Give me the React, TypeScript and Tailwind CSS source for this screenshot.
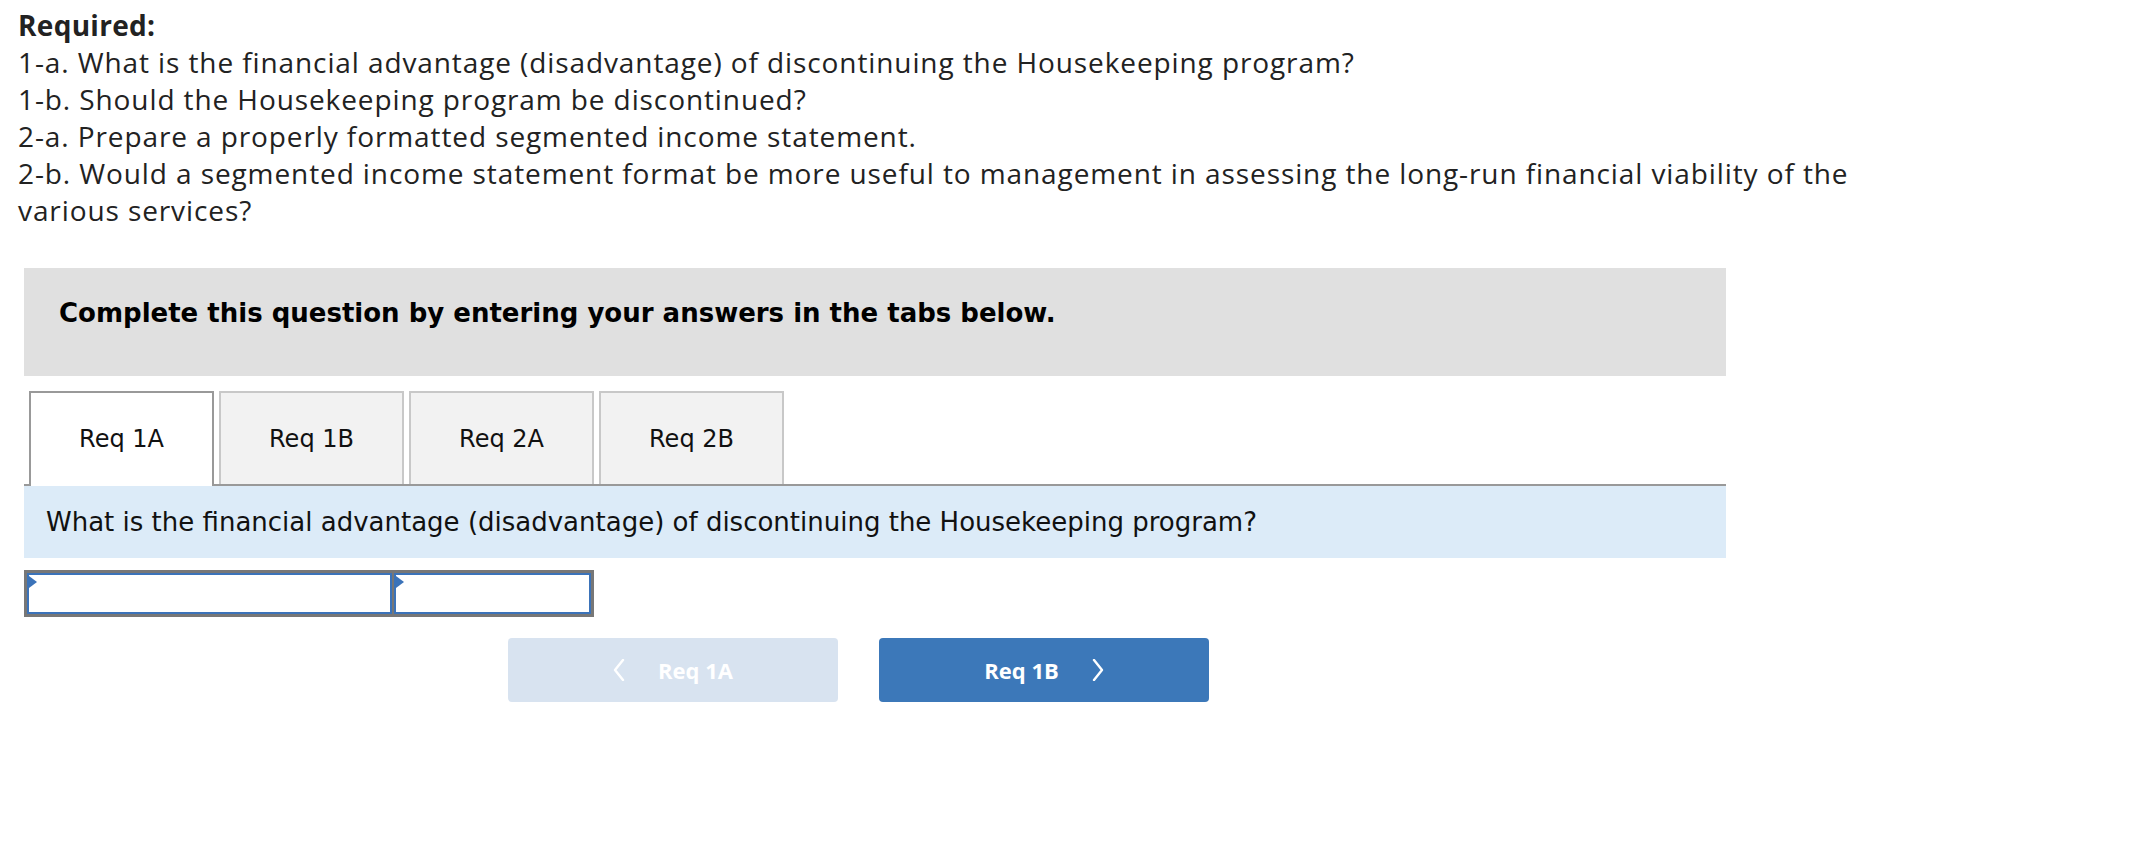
import React from 'react'

const tabs = ['Req 1A', 'Req 1B', 'Req 2A', 'Req 2B']

function Chevron({ dir }: { dir: 'left' | 'right' }) {
  return (
    <svg width="12" height="22" viewBox="0 0 12 22" fill="none">
      <polyline
        points={dir === 'left' ? '10,1 2,11 10,21' : '2,1 10,11 2,21'}
        stroke="white"
        strokeWidth="2.4"
        strokeLinecap="round"
        strokeLinejoin="round"
      />
    </svg>
  )
}

export default function App() {
  return (
    <div className="min-h-[850px] bg-white">
      {/* Required list */}
      <div className="w-[1900px] pt-[7px] pl-[18px] font-['Open_Sans',sans-serif] text-[28px] leading-[37px] tracking-[0.9px] text-[#222]">
        <p className="font-bold tracking-[0.3px]">Required:</p>
        <p>1-a. What is the financial advantage (disadvantage) of discontinuing the Housekeeping program?</p>
        <p>1-b. Should the Housekeeping program be discontinued?</p>
        <p>2-a. Prepare a properly formatted segmented income statement.</p>
        <p>
          2-b. Would a segmented income statement format be more useful to management in assessing the long-run financial viability of the various services?
        </p>
      </div>

      <div className="mt-[39px] ml-[24px] w-[1702px] font-['DejaVu_Sans',Verdana,sans-serif]">
        {/* Instruction bar */}
        <div className="h-[108px] bg-[#e0e0e0] pt-[29px] pl-[35px] text-[26px] leading-[32px] font-bold text-black">
          Complete this question by entering your answers in the tabs below.
        </div>

        {/* Tabs */}
        <div className="mt-[15px] flex items-end gap-[5px] border-b-2 border-[#999] pl-[5px]">
          {tabs.map((t, i) =>
            i === 0 ? (
              <div
                key={t}
                className="-mb-[2px] flex h-[95px] w-[185px] items-center justify-center border-2 border-b-0 border-[#999] bg-white pb-[2px] text-[24px] text-[#111]"
              >
                {t}
              </div>
            ) : (
              <div
                key={t}
                className="flex h-[93px] w-[185px] items-center justify-center border-2 border-b-0 border-[#c8c8c8] bg-[#f2f2f2] text-[24px] text-[#111]"
              >
                {t}
              </div>
            )
          )}
        </div>

        {/* Question */}
        <div className="flex h-[72px] items-center bg-[#dcebf8] pl-[22px] text-[26px] text-[#111]">
          What is the financial advantage (disadvantage) of discontinuing the Housekeeping program?
        </div>

        {/* Answer inputs */}
        <div className="mt-[12px] flex h-[47px] w-[570px] gap-[2px] border-[3px] border-[#777] bg-[#777]">
          <div className="relative w-[365px] border-2 border-[#3b73b9] bg-white">
            <span className="absolute top-[1px] left-0 h-0 w-0 border-y-[6px] border-l-[8px] border-y-transparent border-l-[#3b73b9]" />
          </div>
          <div className="relative flex-1 border-2 border-[#3b73b9] bg-white">
            <span className="absolute top-[1px] left-0 h-0 w-0 border-y-[6px] border-l-[8px] border-y-transparent border-l-[#3b73b9]" />
          </div>
        </div>

        {/* Navigation */}
        <div className="mt-[21px] ml-[484px] flex gap-[41px] font-['Open_Sans',sans-serif] text-[22px] font-bold text-white">
          <button className="flex h-[64px] w-[330px] items-center justify-center gap-[33px] rounded-[4px] bg-[#d8e3f0]">
            <Chevron dir="left" />
            <span>Req 1A</span>
          </button>
          <button className="flex h-[64px] w-[330px] items-center justify-center gap-[33px] rounded-[4px] bg-[#3c78b9]">
            <span>Req 1B</span>
            <Chevron dir="right" />
          </button>
        </div>
      </div>
    </div>
  )
}
